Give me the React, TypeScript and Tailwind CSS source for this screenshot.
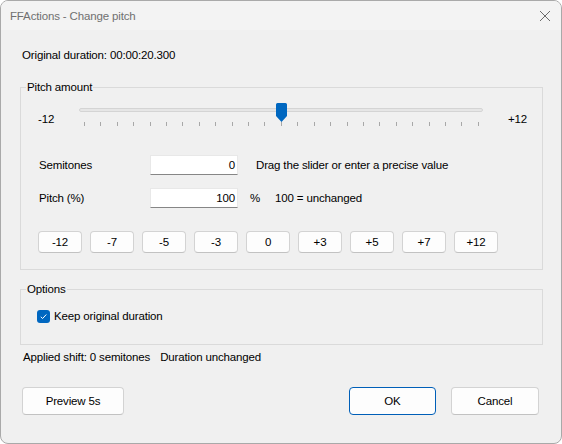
import { useState } from 'react'

const STEPS = ['-12', '-7', '-5', '-3', '0', '+3', '+5', '+7', '+12']
const TICKS = Array.from({ length: 25 }, (_, i) => i)

function CloseIcon() {
  return (
    <svg width="12" height="12" viewBox="0 0 12 12" className="text-[#6b6b6b]">
      <path d="M1 1 L11 11 M11 1 L1 11" stroke="currentColor" strokeWidth="1" fill="none" />
    </svg>
  )
}

function Slider() {
  return (
    <div className="relative h-[30px] w-[418px]">
      <div className="absolute left-[7px] right-[7px] top-[9px] h-[4px] rounded-[2px] border border-[#d4d4d4] bg-[#e6e6e6]" />
      <div className="absolute left-[12px] top-[23px] flex w-[395px] justify-between">
        {TICKS.map((t) => (
          <div key={t} className="h-[4px] w-px bg-[#a8a8a8]" />
        ))}
      </div>
      <svg className="absolute left-[204px] top-[4px]" width="11" height="19" viewBox="0 0 11 19">
        <path d="M1.5 0 H9.5 A1.5 1.5 0 0 1 11 1.5 V13 L5.5 19 L0 13 V1.5 A1.5 1.5 0 0 1 1.5 0 Z" fill="#0067c0" />
      </svg>
    </div>
  )
}

function StepButton({ label }: { label: string }) {
  return (
    <button
      type="button"
      className="h-[22px] w-[44px] rounded-[4px] border border-[#d3d3d3] border-b-[#c2c2c2] bg-[#fdfdfd] text-[11.5px] tracking-[-0.15px] text-black"
    >
      {label}
    </button>
  )
}

export default function App() {
  const [keep, setKeep] = useState(true)

  return (
    <div className="flex h-[444px] w-[562px] flex-col overflow-hidden rounded-[8px] border border-[#a9a9a9] bg-[#f0f0f0] font-['Segoe_UI','Liberation_Sans',sans-serif] text-[11.5px] leading-[16px] tracking-[-0.15px] text-black">
      <div className="flex h-[29px] shrink-0 items-center justify-between bg-[#f3f3f3] pl-[9px] pr-[10px]">
        <span className="text-[#707070]">FFActions - Change pitch</span>
        <CloseIcon />
      </div>

      <div className="flex flex-col pl-[19px] pr-[18px]">
        <div className="mt-[17px] pl-[2px]">Original duration: 00:00:20.300</div>

        <fieldset className="mt-[16px] border border-[#dadada] pb-[16px] pl-[17px]">
          <legend className="ml-[-12px] px-[1px]">Pitch amount</legend>

          <div className="mt-[4px] flex items-start">
            <span className="mt-[12px] w-[34px]">-12</span>
            <Slider />
            <span className="ml-[18px] mt-[12px]">+12</span>
          </div>

          <div className="mt-[26px] flex h-[20px] items-center">
            <span className="ml-[1px] w-[111px]">Semitones</span>
            <div className="flex h-[20px] w-[88px] items-center justify-end border border-[#e8e8e8] border-b-[#868686] bg-white pr-[2px]">
              0
            </div>
            <span className="ml-[18px]">Drag the slider or enter a precise value</span>
          </div>

          <div className="mt-[13px] flex h-[20px] items-center">
            <span className="ml-[1px] w-[111px]">Pitch (%)</span>
            <div className="flex h-[20px] w-[88px] items-center justify-end border border-[#e8e8e8] border-b-[#868686] bg-white pr-[2px]">
              100
            </div>
            <span className="ml-[12px]">%</span>
            <span className="ml-[15px]">100 = unchanged</span>
          </div>

          <div className="mt-[23px] flex gap-[8px]">
            {STEPS.map((s) => (
              <StepButton key={s} label={s} />
            ))}
          </div>
        </fieldset>

        <fieldset className="mt-[11px] border border-[#dadada] pb-[20px] pl-[16px]">
          <legend className="ml-[-11px] px-[1px]">Options</legend>
          <label className="mt-[11px] flex h-[16px] items-center" onClick={() => setKeep(!keep)}>
            <span className="flex h-[13px] w-[13px] items-center justify-center rounded-[3px] bg-[#0067c0]">
              {keep && (
                <svg width="9" height="9" viewBox="0 0 9 9">
                  <path d="M1.8 4.8 L3.6 6.5 L7.3 2.5" stroke="white" strokeWidth="1" fill="none" />
                </svg>
              )}
            </span>
            <span className="ml-[4px]">Keep original duration</span>
          </label>
        </fieldset>

        <div className="mt-[4px] flex pl-[3px]">
          <span>Applied shift: 0 semitones</span>
          <span className="ml-[10px]">Duration unchanged</span>
        </div>

        <div className="mt-[22px] flex items-center pl-[2px] pr-[4px]">
          <button
            type="button"
            className="h-[28px] w-[102px] rounded-[4px] border border-[#d3d3d3] border-b-[#c2c2c2] bg-[#fdfdfd]"
          >
            Preview 5s
          </button>
          <div className="flex-1" />
          <button
            type="button"
            className="h-[28px] w-[87px] rounded-[4px] border border-[#005fb8] bg-[#fdfdfd]"
          >
            OK
          </button>
          <button
            type="button"
            className="ml-[15px] h-[28px] w-[88px] rounded-[4px] border border-[#d3d3d3] border-b-[#c2c2c2] bg-[#fdfdfd]"
          >
            Cancel
          </button>
        </div>
      </div>
    </div>
  )
}
